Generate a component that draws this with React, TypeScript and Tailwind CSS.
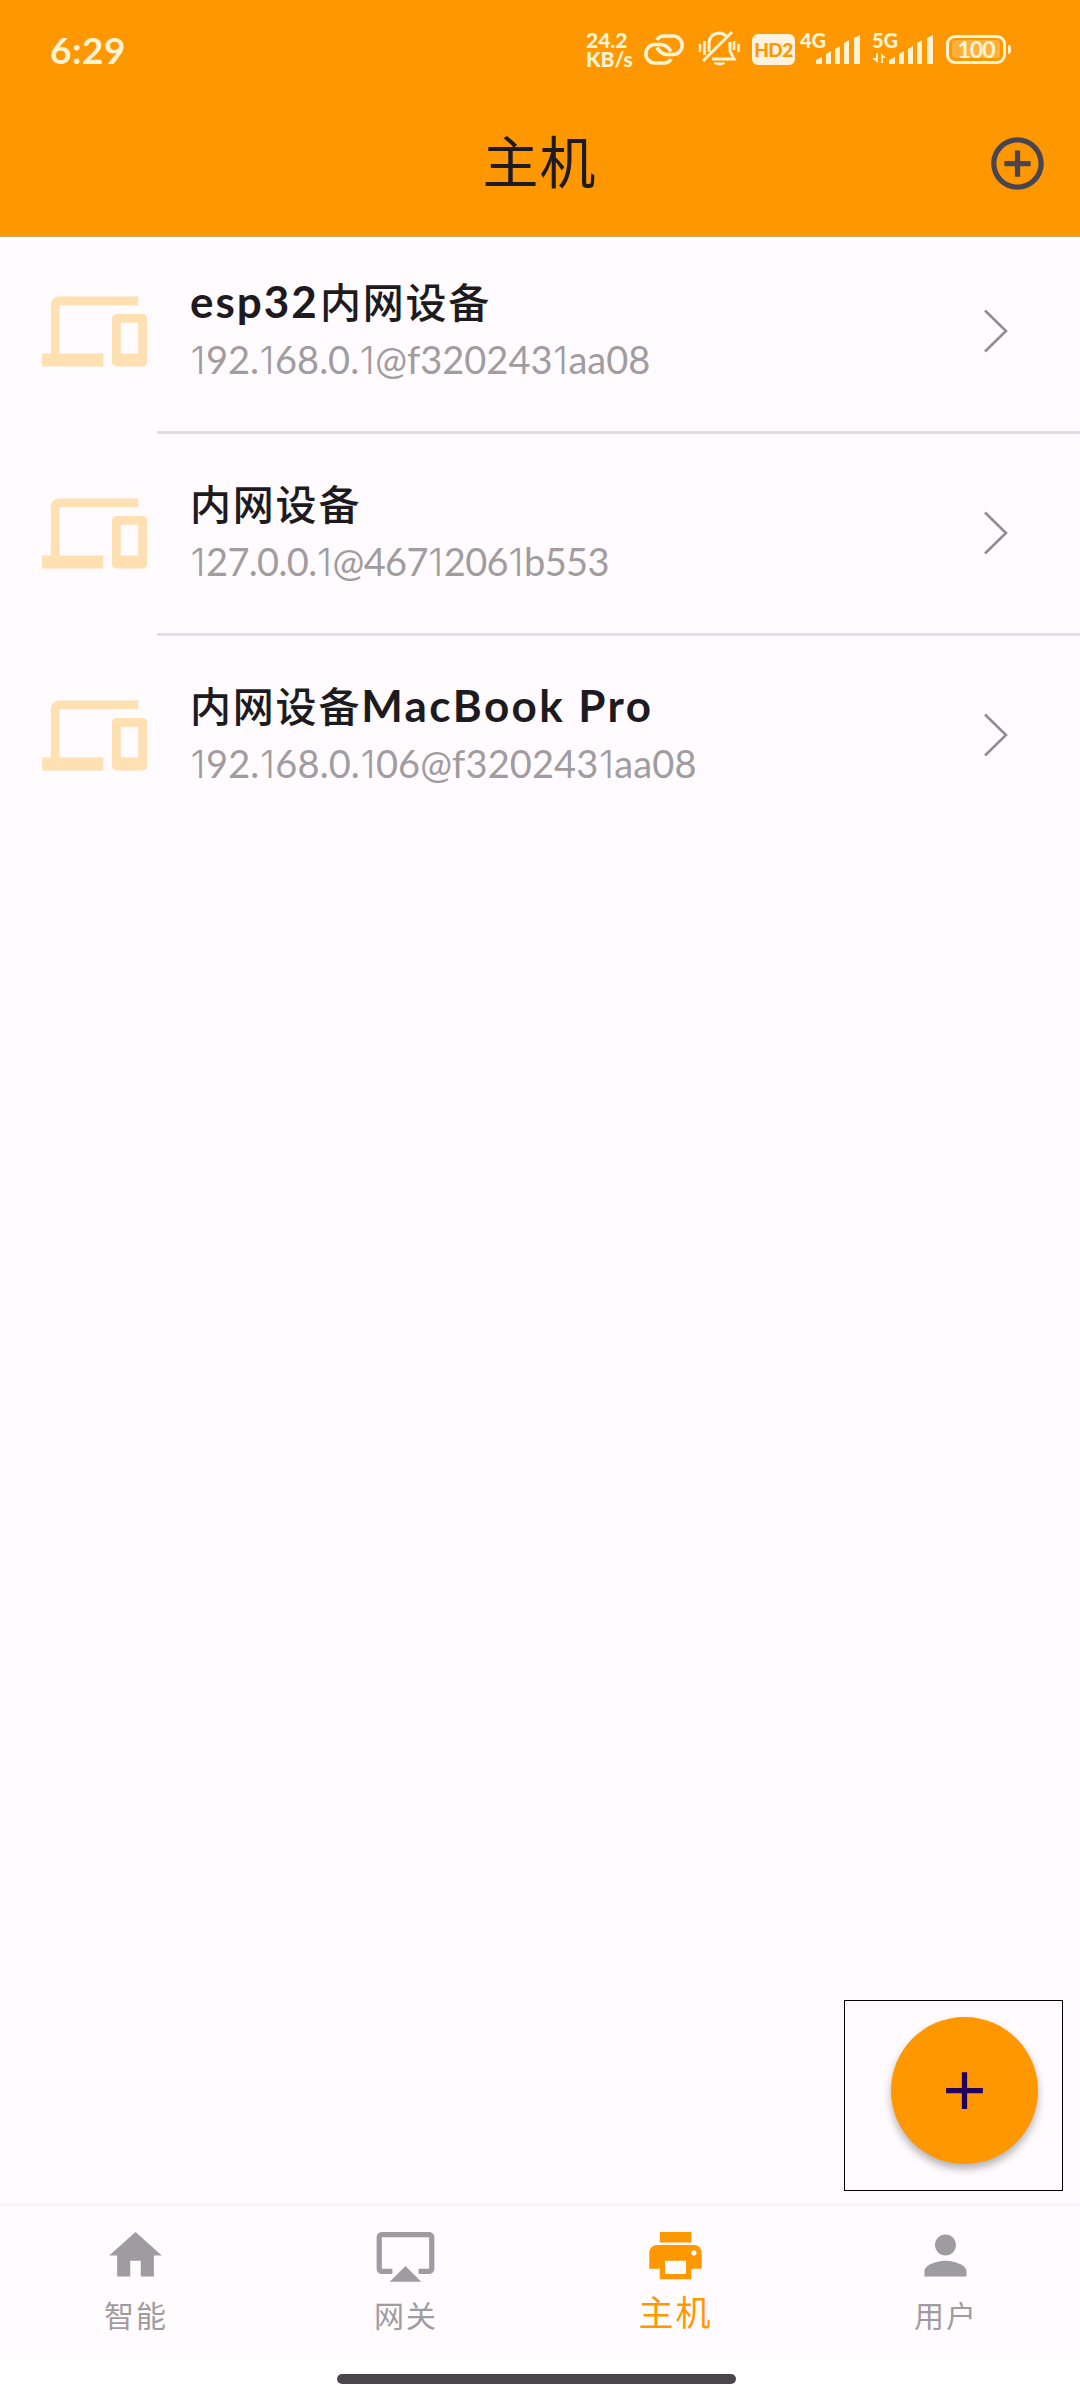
import type { ReactNode } from "react";

const latin = "font-['Lato','Noto_Sans_CJK_SC',sans-serif]";

function StatusBar() {
  return (
    <div className="flex h-[98px] items-center pl-[50px] text-[#fff3d6]">
      <span className="w-[536px] font-['Lato',sans-serif] text-[37px] font-bold leading-none tracking-[0.5px]">6:29</span>
      <div className="w-[52px] whitespace-nowrap font-['Lato',sans-serif] text-[21px] font-black leading-[19px]">
        <div>24.2</div>
        <div>KB/s</div>
      </div>
      <svg className="ml-[6px] h-[31px] w-[40px]" viewBox="0 0 40 31" fill="none" stroke="currentColor" strokeWidth="3.6">
        <path d="M13 6Q15 2 20 2H29A9.2 9.2 0 0 1 29 20.5H23Q17 20.5 13 13.5" />
        <path d="M27 25Q25 29 20 29H11A9.2 9.2 0 0 1 11 10.5H17Q23 10.5 27 17.5" />
      </svg>
      <svg className="ml-[14px] h-[38px] w-[42px]" viewBox="0 0 42 38" fill="none" stroke="currentColor" strokeWidth="3">
        <path d="M5 31L34 2M11 22V14Q11 4 21 3Q25 3 28 6M32 12V21L36 29H14" />
        <path d="M2 14v8M6.5 11v14M36 11v9M40.5 14v8" strokeWidth="2.6" />
        <path d="M16 33h11q-5 4-11 0z" fill="currentColor" strokeWidth="1" />
      </svg>
      <div className="ml-[12px] flex h-[31px] w-[43px] items-center justify-center rounded-[6px] bg-[#fff3e0] font-['Lato',sans-serif] text-[19px] font-black leading-none tracking-[-0.5px] text-[#ff9800]">HD2</div>
      <Signal label="4G" />
      <Signal label="5G" data />
      <div className="ml-[13px] flex h-[29px] w-[60px] items-center justify-center rounded-[9px] border-[3px] border-current">
        <div className="flex h-[18px] w-[48px] items-center justify-center rounded-[3px] bg-[#ffb03a] font-['Lato',sans-serif] text-[23px] font-bold leading-none tracking-[-1px]">100</div>
      </div>
      <div className="ml-[2px] h-[9px] w-[3px] rounded-r-full bg-current" />
    </div>
  );
}

function Signal({ label, data = false }: { label: string; data?: boolean }) {
  return (
    <div className={data ? "relative ml-[12px] h-[34px] w-[61px]" : "relative ml-[5px] h-[34px] w-[60px]"}>
      <span className="absolute left-0 top-[-1px] font-['Lato',sans-serif] text-[20px] font-black leading-[18px]">{label}</span>
      <svg className="h-[34px] w-full" viewBox={data ? "-1 0 61 34" : "0 0 60 34"} fill="currentColor">
        <path d="M16 32v-4l6-3v7zM26 32V22l5-3v13zM35 32V17l5-3v18zM44 32V11l5-3v24zM54 32V6l6-3v29z" />
        {data && <path d="M3 21h2v10L-1 26h4zM8 31V21l5 5h-3v5z" />}
      </svg>
    </div>
  );
}

function Header() {
  return (
    <header className="h-[237px] border-b border-[#c5a66a] bg-[#ff9800]">
      <StatusBar />
      <div className="grid h-[130px] grid-cols-[1fr_auto_1fr] items-center">
        <h1 className="col-start-2 -mt-[8px] pr-[1px] font-['Noto_Sans_CJK_SC',sans-serif] text-[56px] leading-none tracking-[1px] text-[#1d1b20]">主机</h1>
        <button className="mr-[31px] justify-self-end text-[#49454f]" aria-label="添加">
          <svg className="size-[63px]" viewBox="0 0 24 24" fill="currentColor">
            <path d="M13 7h-2v4H7v2h4v4h2v-4h4v-2h-4V7zm-1-5C6.48 2 2 6.48 2 12s4.48 10 10 10 10-4.48 10-10S17.52 2 12 2zm0 18c-4.41 0-8-3.59-8-8s3.59-8 8-8 8 3.59 8 8-3.59 8-8 8z" />
          </svg>
        </button>
      </div>
    </header>
  );
}

/* The digit one is drawn without a foot and set narrower than the other digits. */
function Address({ text }: { text: string }) {
  return (
    <>
      {text.split(/(1)/).map((part, i) =>
        part === "1" ? (
          <span key={i} className="inline-flex w-[16px] justify-center font-['Inter',sans-serif] font-light tracking-normal">1</span>
        ) : (
          <span key={i}>{part}</span>
        ),
      )}
    </>
  );
}

function HostRow({ title, address, spacing, last = false }: { title: ReactNode; address: string; spacing: string; last?: boolean }) {
  return (
    <li className="relative flex h-[202px] items-start">
      <svg className="ml-[42px] mt-[47px] size-[105px] text-[#ffe0b2]" viewBox="0 0 24 24" fill="currentColor">
        <path d="M4 6h18V4H4c-1.1 0-2 .9-2 2v11H0v3h14v-3H4V6zm19 2h-6c-.55 0-1 .45-1 1v10c0 .55.45 1 1 1h6c.55 0 1-.45 1-1V9c0-.55-.45-1-1-1zm-1 9h-4v-7h4v7z" />
      </svg>
      <div className={`ml-[43px] mt-[41px] flex-1 whitespace-nowrap ${latin}`}>
        <div className="h-[58px] text-[44px] font-bold leading-[57px] text-[#1d1b20]">{title}</div>
        <div className={`h-[57px] text-[38px] leading-[57px] text-[#a09ca0] ${spacing}`}><Address text={address} /></div>
      </div>
      <svg className="mr-[70px] mt-[77px] h-[44px] w-[28px]" viewBox="0 0 28 44" fill="none" stroke="#918d92" strokeWidth="2.6">
        <path d="M3 1.5L24 22L3 42.5" />
      </svg>
      {!last && <div className="absolute bottom-0 left-[157px] right-0 h-[3px] bg-[#e1dfe2]" />}
    </li>
  );
}

const cjkTitle = "font-['Noto_Sans_CJK_SC',sans-serif] font-medium text-[41px] leading-none tracking-[1.8px]";

const tabs = [
  { label: "智能", path: "M10 20v-6h4v6h5v-8h3L12 3 2 12h3v8z" },
  { label: "网关", path: "M6 22h12l-6-6zM21 3H3c-1.1 0-2 .9-2 2v12c0 1.1.9 2 2 2h4v-2H3V5h18v12h-4v2h4c1.1 0 2-.9 2-2V5c0-1.1-.9-2-2-2z" },
  { label: "主机", active: true, path: "M19 8H5c-1.66 0-3 1.34-3 3v6h4v4h12v-4h4v-6c0-1.66-1.34-3-3-3zm-3 11H8v-5h8v5zm3-7c-.55 0-1-.45-1-1s.45-1 1-1 1 .45 1 1-.45 1-1 1zm-1-9H6v4h12V3z" },
  { label: "用户", path: "M12 12c2.21 0 4-1.79 4-4s-1.79-4-4-4-4 1.79-4 4 1.79 4 4 4zm0 2c-2.67 0-8 1.34-8 4v2h16v-2c0-2.66-5.33-4-8-4z" },
];

export default function App() {
  return (
    <div className="relative flex h-[2400px] w-[1080px] flex-col overflow-hidden bg-[#fffbff]">
      <Header />
      <ul className="-mt-[5px] flex-1">
        <HostRow
          title={<><span className="mr-[1px] tracking-[2px]">esp32</span><span className={cjkTitle}>内网设备</span></>}
          address="192.168.0.1@f3202431aa08"
          spacing="tracking-[0px]"
        />
        <HostRow title={<span className={cjkTitle}>内网设备</span>} address="127.0.0.1@46712061b553" spacing="tracking-[-0.65px]" />
        <HostRow
          title={<><span className={cjkTitle}>内网设备</span><span className="tracking-[2.4px]">MacBook Pro</span></>}
          address="192.168.0.106@f3202431aa08"
          spacing="tracking-[0.1px]"
          last
        />
      </ul>
      <div className="absolute left-[844px] top-[2000px] h-[191px] w-[219px] border border-black">
        <button className="ml-[46px] mt-[16px] flex size-[147px] items-center justify-center rounded-full bg-[#ff9800] text-[#21005d] shadow-[0_5px_9px_rgba(0,0,0,0.3)]" aria-label="添加主机">
          <svg className="size-[63px]" viewBox="0 0 24 24" fill="currentColor">
            <path d="M19 13h-6v6h-2v-6H5v-2h6V5h2v6h6z" />
          </svg>
        </button>
      </div>
      <nav className="grid h-[154px] grid-cols-4 border-t-[3px] border-[#f8f3f8]">
        {tabs.map((tab) => (
          <div key={tab.label} className={tab.active ? "flex flex-col items-center text-[#ff9800]" : "flex flex-col items-center text-[#9f9c9f]"}>
            <svg className="mt-[18px] size-[63px]" viewBox="0 0 24 24" fill="currentColor">
              <path d={tab.path} />
            </svg>
            <span className={tab.active
              ? "pl-[1px] font-['Noto_Sans_CJK_SC',sans-serif] text-[35px] leading-[48px] tracking-[2px]"
              : "mt-[6px] pl-[2px] font-['Noto_Sans_CJK_SC',sans-serif] text-[30px] leading-[42px] tracking-[2px]"}>{tab.label}</span>
          </div>
        ))}
      </nav>
      <div className="h-[43px] bg-white pl-[337px] pt-[17px]">
        <div className="h-[10px] w-[399px] rounded-full bg-[#49474a]" />
      </div>
    </div>
  );
}
